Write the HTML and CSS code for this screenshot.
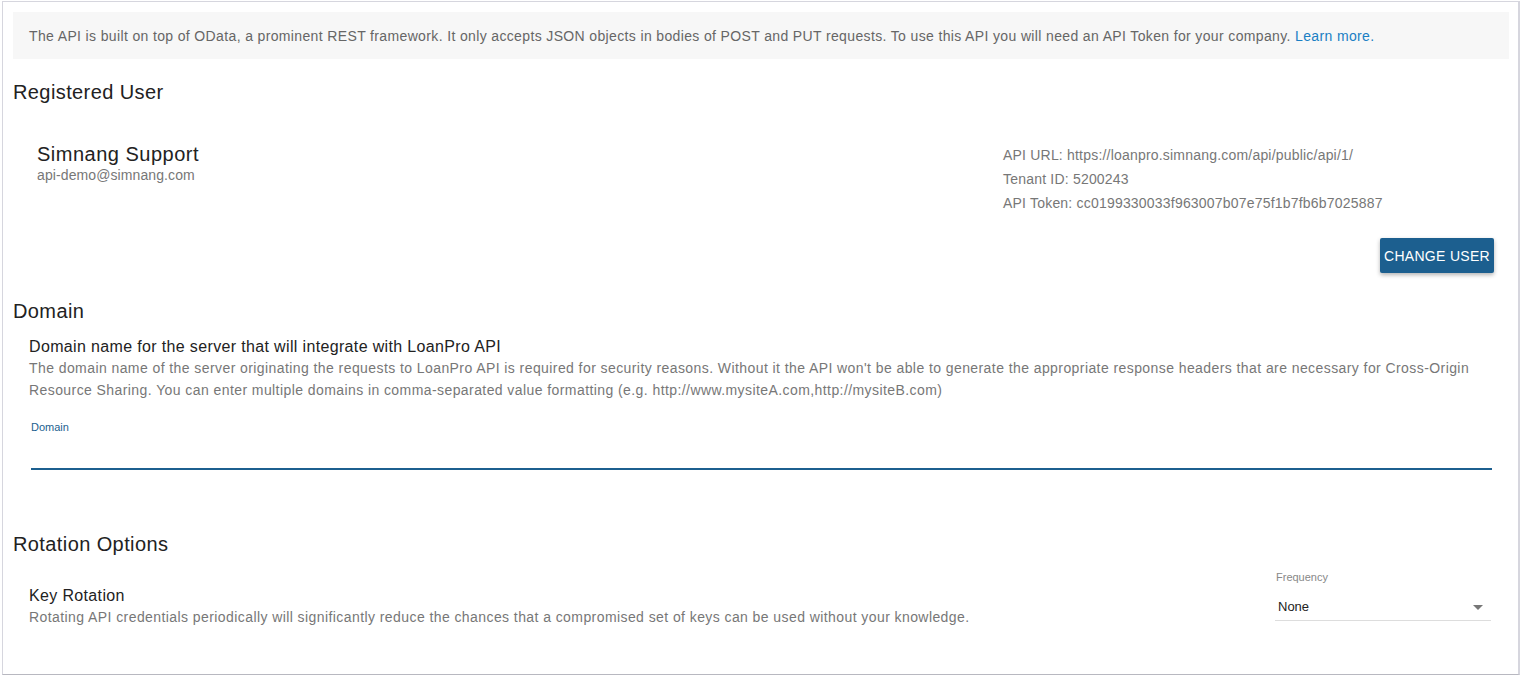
FILE: index.html
```html
<!DOCTYPE html>
<html lang="en">
<head>
  <meta charset="UTF-8">
  <title>API Settings</title>
  <link rel="stylesheet" href="styles.css">
</head>
<body>

<div class="panel">
  <div class="info-banner">
    The API is built on top of OData, a prominent REST framework. It only accepts JSON objects in bodies of POST and PUT requests. To use this API you will need an API Token for your company. <a href="#">Learn more.</a>
  </div>

  <h2 class="section-title">Registered User</h2>

  <div class="user-row">
    <div class="user-info">
      <div class="user-name">Simnang Support</div>
      <div class="user-email">api-demo@simnang.com</div>
    </div>
    <div class="api-info">
      <div>API URL: https://loanpro.simnang.com/api/public/api/1/</div>
      <div>Tenant ID: 5200243</div>
      <div>API Token: cc0199330033f963007b07e75f1b7fb6b7025887</div>
      <div class="button-row">
        <button class="change-button" type="button">CHANGE USER</button>
      </div>
    </div>
  </div>

  <h2 class="section-title domain-title">Domain</h2>

  <div class="setting">
    <div class="setting-name">Domain name for the server that will integrate with LoanPro API</div>
    <div class="setting-desc">The domain name of the server originating the requests to LoanPro API is required for security reasons. Without it the API won't be able to generate the appropriate response headers that are necessary for Cross-Origin Resource Sharing. You can enter multiple domains in comma-separated value formatting (e.g. http://www.mysiteA.com,http://mysiteB.com)</div>
  </div>

  <div class="text-field">
    <label for="domain">Domain</label>
    <input type="text" id="domain">
  </div>

  <h2 class="section-title rotation-title">Rotation Options</h2>

  <div class="rotation-row">
    <div class="setting rotation-text">
      <div class="setting-name">Key Rotation</div>
      <div class="setting-desc">Rotating API credentials periodically will significantly reduce the chances that a compromised set of keys can be used without your knowledge.</div>
    </div>
    <div class="select-field">
      <div class="select-label">Frequency</div>
      <div class="select-box">
        <span>None</span>
        <svg width="10" height="5" viewBox="0 0 10 5"><path d="M0 0 L10 0 L5 5 Z" fill="#777"/></svg>
      </div>
    </div>
  </div>
</div>

</body>
</html>
```

FILE: styles.css
```css
body {
  margin: 0;
  font-family: "Liberation Sans", Arial, sans-serif;
  background: #fff;
  color: #222;
}

.panel {
  margin: 1px 3px 0 2px;
  height: 674px;
  box-sizing: border-box;
  border: 1px solid #d6d6de;
  border-bottom-color: #b8b8c0;
  border-right-width: 2px;
  padding: 10px 9px 0 10px;
}

.info-banner {
  background: #f7f7f7;
  color: #666;
  font-size: 14px;
  line-height: 19px;
  letter-spacing: 0.36px;
  padding: 15px 16px 13px;
}

.info-banner a {
  color: #1a7fc4;
  text-decoration: none;
}

.section-title {
  font-size: 20px;
  font-weight: normal;
  line-height: 24px;
  letter-spacing: 0.4px;
  margin: 21px 0 0;
  color: #222;
}

.user-row {
  display: flex;
  justify-content: space-between;
  margin-top: 38px;
}

.user-info {
  padding-left: 24px;
}

.user-name {
  font-size: 20px;
  line-height: 24px;
  letter-spacing: 0.5px;
}

.user-email {
  font-size: 14px;
  line-height: 18px;
  letter-spacing: 0.1px;
  color: #777;
}

.api-info {
  width: 491px;
  margin-right: 15px;
  font-size: 14px;
  line-height: 24px;
  letter-spacing: 0.2px;
  color: #777;
  margin-top: 1px;
  margin-left: -1px;
}

.button-row {
  display: flex;
  justify-content: flex-end;
  margin-top: 23px;
}

.change-button {
  background: #1c5f8f;
  color: #fff;
  border: none;
  border-radius: 2px;
  font-family: inherit;
  font-size: 14px;
  letter-spacing: 0.3px;
  height: 35px;
  width: 114px;
  padding: 0;
  box-shadow: 0 2px 4px rgba(0,0,0,0.3);
}

.domain-title {
  margin-top: 26px;
}

.setting {
  padding: 14px 16px 0;
}

.setting-name {
  font-size: 16px;
  line-height: 20px;
  letter-spacing: 0.35px;
}

.setting-desc {
  font-size: 14px;
  line-height: 22px;
  letter-spacing: 0.42px;
  color: #777;
}

.text-field {
  margin: 19px 17px 0 18px;
  display: flex;
  flex-direction: column;
}

.text-field label {
  font-size: 11px;
  line-height: 14px;
  color: #1c5f8f;
}

.text-field input {
  border: none;
  border-bottom: 2px solid #1c5f8f;
  height: 34px;
  padding: 0;
  outline: none;
  font-family: inherit;
  font-size: 14px;
}

.rotation-title {
  margin-top: 62px;
}

.rotation-row {
  display: flex;
  justify-content: space-between;
  align-items: flex-start;
  margin-top: 14px;
}

.rotation-text {
  padding-top: 16px;
}

.select-field {
  width: 216px;
  margin-right: 18px;
}

.select-label {
  font-size: 11px;
  line-height: 14px;
  color: #888;
  padding-left: 1px;
}

.select-box {
  display: flex;
  justify-content: space-between;
  align-items: center;
  font-size: 13px;
  line-height: 16px;
  padding: 15px 8px 5px 3px;
  border-bottom: 1px solid #ddd;
  color: #222;
}
```
